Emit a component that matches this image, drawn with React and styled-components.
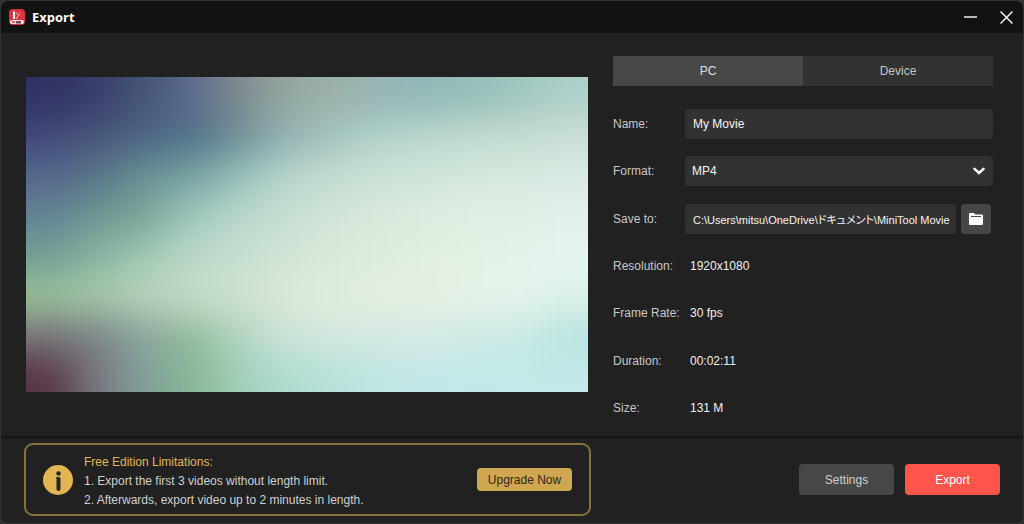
import styled, { createGlobalStyle } from "styled-components";

const GlobalStyle = createGlobalStyle`
  * {
    box-sizing: border-box;
  }
  body {
    margin: 0;
    background-color: #303233;
    font-family: "Liberation Sans", Arial, "Noto Sans CJK JP", sans-serif;
    font-size: 12px;
    color: #d0d0d0;
  }
  button, input, select {
    font: inherit;
  }
`;

const Window = styled.div`
  display: flex;
  flex-direction: column;
  min-height: calc(100vh - 2px);
  margin: 1px;
  border-radius: 8px;
  overflow: hidden;
  background-color: #212121;
`;

const TitleBar = styled.header`
  display: flex;
  align-items: center;
  gap: 7px;
  height: 32px;
  padding: 0 2px 0 8px;
  background-color: #121212;
`;

const Title = styled.h1`
  flex: 1;
  margin: 0;
  font-family: "Open Sans", "Segoe UI", sans-serif;
  font-size: 13px;
  font-weight: 700;
  line-height: 18px;
  color: #fff;
`;

const WindowButton = styled.button`
  display: flex;
  align-items: center;
  justify-content: center;
  width: 29px;
  height: 28px;
  padding: 0;
  border: none;
  background: none;
  color: #f0f0f0;
  cursor: pointer;
`;

const Main = styled.main`
  flex: 1;
  display: grid;
  grid-template-columns: 1fr 380px;
  gap: 25px;
  padding: 23px 30px 13px 25px;
`;

const Preview = styled.svg`
  align-self: start;
  width: 100%;
  aspect-ratio: 562 / 315;
  margin-top: 21px;
`;

const Panel = styled.section`
  display: flex;
  flex-direction: column;
  gap: 23px;
`;

const Tabs = styled.div`
  display: flex;
  height: 30px;
`;

const Tab = styled.button`
  flex: 1;
  padding: 0;
  border: none;
  background-color: ${(props) => (props.$active ? "#474747" : "#323232")};
  color: ${(props) => (props.$active ? "#e0e0e0" : "#c4c4c4")};
  cursor: pointer;
`;

const Form = styled.form`
  flex: 1;
  display: flex;
  flex-direction: column;
  justify-content: space-between;
`;

const Row = styled.div`
  display: flex;
  align-items: center;
  height: 30px;
`;

const Label = styled.label`
  flex: none;
  width: 72px;
  color: #c8c8c8;
`;

const Value = styled.output`
  padding-left: 5px;
  color: #f0f0f0;
`;

const TextInput = styled.input`
  flex: 1;
  min-width: 0;
  height: 30px;
  padding: 0 4px 0 8px;
  border: none;
  border-radius: 4px;
  background-color: #323232;
  color: #f4f4f4;
`;

const PathInput = styled(TextInput)`
  font-size: 11px;
  font-feature-settings: "palt";
`;

const SelectBox = styled.div`
  flex: 1;
  position: relative;
`;

const Select = styled.select`
  appearance: none;
  display: block;
  width: 100%;
  height: 30px;
  padding: 0 30px 0 7px;
  border: none;
  border-radius: 4px;
  background-color: #323232;
  color: #f4f4f4;
`;

const Chevron = styled.svg`
  position: absolute;
  top: 11px;
  right: 8px;
  pointer-events: none;
`;

const FolderButton = styled.button`
  display: flex;
  align-items: center;
  justify-content: center;
  width: 30px;
  height: 30px;
  margin: 0 2px 0 5px;
  padding: 0;
  border: none;
  border-radius: 4px;
  background-color: #474747;
  cursor: pointer;
`;

const Footer = styled.footer`
  display: flex;
  align-items: center;
  gap: 11px;
  padding: 5px 23px 7px 23px;
  border-top: 2px solid #151515;
`;

const Notice = styled.section`
  flex: 1;
  display: flex;
  align-items: center;
  height: 73px;
  margin-right: 197px;
  padding: 0 17px;
  border: 2px solid #86703c;
  border-radius: 9px;
`;

const NoticeText = styled.div`
  flex: 1;
  margin-left: 11px;
  padding-top: 3px;
  line-height: 19px;
`;

const NoticeTitle = styled.h2`
  margin: 0;
  font-size: 12px;
  font-weight: 400;
  color: #e3b655;
`;

const Limits = styled.ol`
  margin: 0;
  padding: 0;
  list-style-type: none;
`;

const Button = styled.button`
  width: 95px;
  height: ${(props) => (props.$small ? "23px" : "31px")};
  padding: 0;
  border: none;
  border-radius: 4px;
  background-color: ${(props) => props.$bg};
  color: ${(props) => props.$color};
  cursor: pointer;
`;

// one colour per cell, blurred together into a soft frame
const frame = [
  "313263 383d69 455477 5b6a8b 7d8a8f 93a79f 9bb0a8 97b5b5 93b8b8 97bdb8 a0c5c0 acd0c8",
  "42497a 48577a 4c6583 507289 6d8d98 92b2b3 a3c6c1 b0d3cb b9d8ce c0dbd0 c4dcd0 cbdfd5",
  "56688c 587689 6a9394 76a3a2 98bfb8 b5d6cc c4dcd0 cde2d6 d0e5d9 d5e8dd d7eae0 d8ebe3",
  "638493 6e9793 7aa597 a0c7bd b8d8cc c7dfd2 d2e5d8 d8e9dc dcece0 e0efe3 e0efe5 e0f1ea",
  "739e95 89b3a2 a3c9b4 bad9c8 c5dfd0 d0e4d6 d8e9db ddecdf e1efe1 e3f1e4 e3f3ea e4f5ef",
  "9ac297 a6c9a9 b6d4bd c3ddca cfe2d0 dae8d8 e0ecdc e4efe0 e8efe1 e6f2e7 e6f4ec dcf2ea",
  "78757a 788588 8da59c 90b99c b0d3c0 cbe3d8 d3e8df d5e8e3 d5eae6 cdeae5 c9e9e4 b8e3de",
  "573445 79777f 81a09c 87b693 a0ceb8 addccf b7e1da bfe6e2 c4e8e8 c2e9e8 c3e9e8 c3e9e8",
].map((row) => row.split(" "));

const clamp = (n, max) => Math.min(Math.max(n, 0), max);

const PreviewFrame = () => {
  const cells = [];
  for (let y = -2; y < 10; y++) {
    for (let x = -2; x < 14; x++) {
      cells.push(
        <rect
          key={`${x}:${y}`}
          x={x * 47}
          y={y * 40}
          width="48"
          height="41"
          fill={`#${frame[clamp(y, 7)][clamp(x, 11)]}`}
        />
      );
    }
  }
  return (
    <Preview viewBox="0 0 562 316" preserveAspectRatio="none" role="img" aria-label="Movie preview">
      <filter
        id="soften"
        filterUnits="userSpaceOnUse"
        x="-94"
        y="-80"
        width="752"
        height="480"
        colorInterpolationFilters="sRGB"
      >
        <feGaussianBlur stdDeviation="21 18" />
      </filter>
      <g filter="url(#soften)">{cells}</g>
    </Preview>
  );
};

const Logo = () => (
  <svg width="16" height="16" viewBox="0 0 16 16" aria-hidden="true">
    <rect width="16" height="16" rx="4" fill="#dc3340" />
    <path d="M4 2.500h2v7.500H4z" fill="#fff" />
    <path d="M7 10l3.500-5M7.500 3.500l1 2M10.500 3l.8 1" stroke="#f7c9cc" strokeWidth="1" />
    <rect x="1" y="11" width="14" height="4" rx="2" fill="#f6dfe0" />
    <path d="M7 12h5v2.500H7z" fill="#6a4e56" />
    <path d="M3 12h3v2H3z" fill="#d9636c" />
  </svg>
);

const App = () => {
  return (
    <>
      <GlobalStyle />
      <Window>
        <TitleBar>
          <Logo />
          <Title>Export</Title>
          <WindowButton aria-label="Minimize">
            <svg width="13" height="13" viewBox="0 0 13 13">
              <path d="M0 6h13" stroke="currentColor" strokeWidth="1.500" />
            </svg>
          </WindowButton>
          <WindowButton aria-label="Close">
            <svg width="13" height="13" viewBox="0 0 13 13">
              <path d="M.5.5l12 12M12.500.5l-12 12" stroke="currentColor" strokeWidth="1.500" />
            </svg>
          </WindowButton>
        </TitleBar>

        <Main>
          <PreviewFrame />
          <Panel>
            <Tabs role="tablist">
              <Tab role="tab" aria-selected="true" $active>
                PC
              </Tab>
              <Tab role="tab" aria-selected="false">
                Device
              </Tab>
            </Tabs>
            <Form onSubmit={(e) => e.preventDefault()}>
              <Row>
                <Label htmlFor="name">Name:</Label>
                <TextInput id="name" defaultValue="My Movie" />
              </Row>
              <Row>
                <Label htmlFor="format">Format:</Label>
                <SelectBox>
                  <Select id="format" defaultValue="MP4">
                    <option>MP4</option>
                  </Select>
                  <Chevron width="12" height="9" viewBox="0 0 12 9" fill="none">
                    <path
                      d="M1.500 1.800L6 6l4.500-4.200"
                      stroke="#fff"
                      strokeWidth="2.500"
                      strokeLinecap="round"
                    />
                  </Chevron>
                </SelectBox>
              </Row>
              <Row>
                <Label htmlFor="path">Save to:</Label>
                <PathInput id="path" defaultValue="C:\Users\mitsu\OneDrive\ドキュメント\MiniTool Movie" />
                <FolderButton type="button" aria-label="Browse">
                  <svg width="16" height="14" viewBox="0 0 16 14">
                    <path
                      d="M1.500 1H6l1.500 1.500h6.500q1 0 1 1V12q0 1-1 1H1.500q-.5 0-.5-1V1.500z"
                      fill="#fff"
                    />
                    <path d="M3 4.500h10" stroke="#474747" />
                  </svg>
                </FolderButton>
              </Row>
              <Row>
                <Label htmlFor="resolution">Resolution:</Label>
                <Value id="resolution">1920x1080</Value>
              </Row>
              <Row>
                <Label htmlFor="rate">Frame Rate:</Label>
                <Value id="rate">30 fps</Value>
              </Row>
              <Row>
                <Label htmlFor="duration">Duration:</Label>
                <Value id="duration">00:02:11</Value>
              </Row>
              <Row>
                <Label htmlFor="size">Size:</Label>
                <Value id="size">131 M</Value>
              </Row>
            </Form>
          </Panel>
        </Main>

        <Footer>
          <Notice>
            <svg width="30" height="30" viewBox="0 0 30 30" aria-hidden="true">
              <circle cx="15" cy="15" r="15" fill="#e3b655" />
              <circle cx="15.500" cy="8.500" r="2.200" fill="#2a2620" />
              <path
                d="M14 12h2q1.500 0 1.500 1.500V24a2 2 0 0 1-4 0V13.500q-.8-.2-.5-1z"
                fill="#2a2620"
              />
            </svg>
            <NoticeText>
              <NoticeTitle>Free Edition Limitations:</NoticeTitle>
              <Limits>
                <li>1. Export the first 3 videos without length limit.</li>
                <li>2. Afterwards, export video up to 2 minutes in length.</li>
              </Limits>
            </NoticeText>
            <Button $small $bg="#cfa750" $color="#2e2716">
              Upgrade Now
            </Button>
          </Notice>
          <Button $bg="#474747" $color="#d0d0d0">
            Settings
          </Button>
          <Button $bg="#ff544a" $color="#fff">
            Export
          </Button>
        </Footer>
      </Window>
    </>
  );
};

export default App;
